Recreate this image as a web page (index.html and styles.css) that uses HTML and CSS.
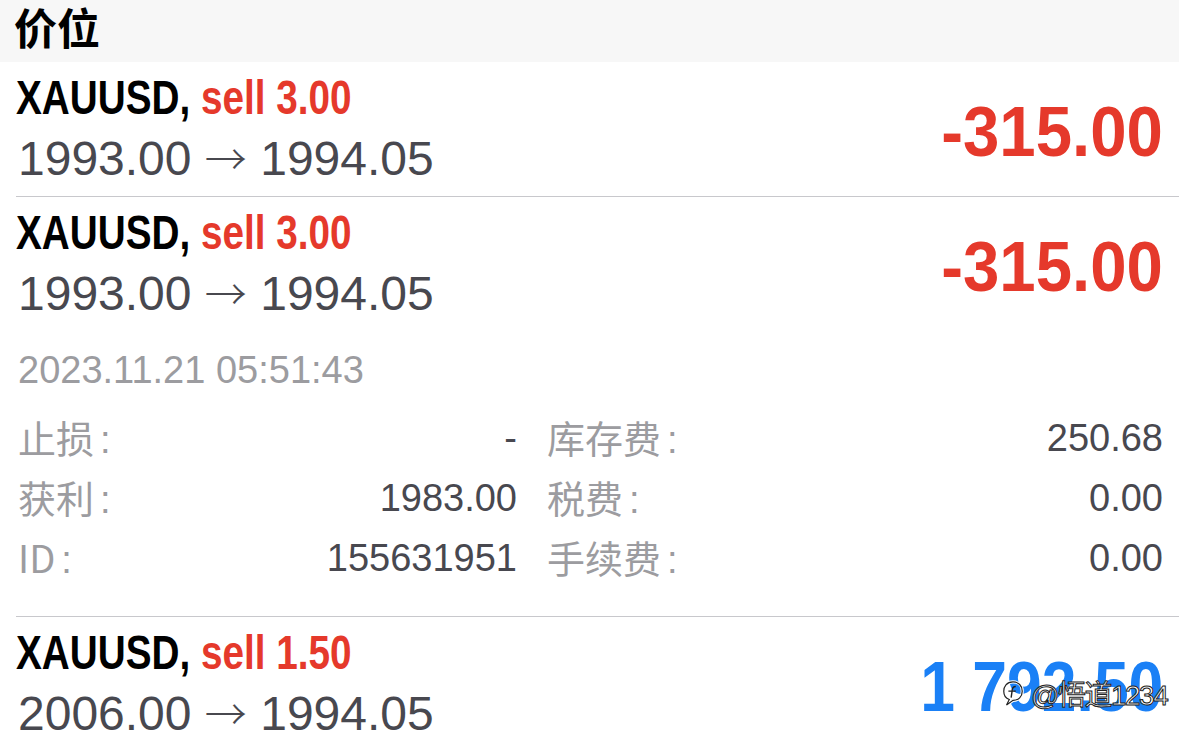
FILE: index.html
```html
<!DOCTYPE html>
<html lang="zh">
<head>
    <meta charset="UTF-8">
    <meta name="viewport" content="width=device-width, initial-scale=1.0">
    <title>价位</title>
    <link rel="stylesheet" href="styles.css">
</head>
<body>
    <div class="section-head">价位</div>

    <!-- 持仓 1 -->
    <div class="position">
        <div class="pos-top">
            <div class="pos-info">
                <div class="pos-title"><span class="narrow">XAUUSD, <span class="sell">sell 3.00</span></span></div>
                <div class="pos-price">1993.00 <span class="arrow">→</span> 1994.05</div>
            </div>
            <div class="pos-profit loss">-315.00</div>
        </div>
    </div>

    <!-- 持仓 2 (展开) -->
    <div class="position">
        <div class="pos-top">
            <div class="pos-info">
                <div class="pos-title"><span class="narrow">XAUUSD, <span class="sell">sell 3.00</span></span></div>
                <div class="pos-price">1993.00 <span class="arrow">→</span> 1994.05</div>
            </div>
            <div class="pos-profit loss">-315.00</div>
        </div>
        <div class="pos-time">2023.11.21 05:51:43</div>
        <div class="pos-details">
            <div class="detail"><span class="label">止损<i>:</i></span><span class="value">-</span></div>
            <div class="detail"><span class="label">库存费<i>:</i></span><span class="value">250.68</span></div>
            <div class="detail"><span class="label">获利<i>:</i></span><span class="value">1983.00</span></div>
            <div class="detail"><span class="label">税费<i>:</i></span><span class="value">0.00</span></div>
            <div class="detail"><span class="label">ID<i>:</i></span><span class="value">155631951</span></div>
            <div class="detail"><span class="label">手续费<i>:</i></span><span class="value">0.00</span></div>
        </div>
    </div>

    <!-- 持仓 3 -->
    <div class="position last">
        <div class="pos-top">
            <div class="pos-info">
                <div class="pos-title"><span class="narrow">XAUUSD, <span class="sell">sell 1.50</span></span></div>
                <div class="pos-price">2006.00 <span class="arrow">→</span> 1994.05</div>
            </div>
            <div class="pos-profit gain">1 792.50</div>
        </div>
    </div>

    <div class="watermark">
        <svg class="wm-icon" width="24" height="28" viewBox="0 0 26 30">
            <path d="M13 3 C6 3 3 8 3 13 C3 18 6 21 9 22 L6 28 L13 23 C19 23 23 19 23 13 C23 7 19 3 13 3 Z" fill="none" stroke="#fff" stroke-width="3.4"/>
            <path d="M13 3 C6 3 3 8 3 13 C3 18 6 21 9 22 L6 28 L13 23 C19 23 23 19 23 13 C23 7 19 3 13 3 Z" fill="none" stroke="#222" stroke-width="1.3"/>
            <path d="M16 8 C13 8 12 10 12 13 L11 20 M8 13 L16 13" fill="none" stroke="#222" stroke-width="1.5"/>
        </svg>
        <span>@悟道1234</span>
    </div>
</body>
</html>
```

FILE: styles.css
```css
body {
    margin: 0;
    background-color: #fff;
    font-family: "Liberation Sans", Arial, "Noto Sans CJK SC", sans-serif;
    color: #48484f;
    overflow: hidden;
    position: relative;
    height: 745px;
}
.section-head {
    background-color: #f7f7f7;
    height: 52px;
    padding: 0 0 10px 14px;
    line-height: 52px;
    font-family: "Noto Sans CJK SC", sans-serif;
    font-size: 43px;
    font-weight: bold;
    color: #000;
}
.position {
    margin-left: 16px;
    padding: 5px 16px 5px 0;
    border-bottom: 1px solid #c8c8cc;
}
.position.last {
    border-bottom: none;
}
.pos-top {
    display: flex;
    align-items: center;
    justify-content: space-between;
}
.pos-title {
    font-weight: bold;
    font-size: 49px;
    line-height: 60px;
    height: 60px;
    color: #000;
    white-space: nowrap;
}
.narrow {
    display: inline-block;
    transform: scaleX(0.79);
    transform-origin: left center;
}
.sell {
    color: #e5392b;
}
.pos-price {
    font-size: 48px;
    line-height: 64px;
    height: 64px;
    color: #48484f;
    padding-left: 2px;
    white-space: nowrap;
}
.arrow {
    font-family: "Noto Sans CJK SC", sans-serif;
    font-size: 42px;
    font-weight: 300;
    line-height: 1;
}
.pos-profit {
    font-weight: bold;
    font-size: 71px;
    padding-top: 4px;
    transform: scaleX(0.92);
    transform-origin: right center;
    white-space: nowrap;
}
.loss {
    color: #e5392b;
}
.gain {
    color: #1a80f6;
    transform: scaleX(0.88);
}
.pos-time {
    margin-top: 14px;
    font-size: 38px;
    line-height: 60px;
    color: #9c9ca0;
    padding-left: 2px;
}
.pos-details {
    display: grid;
    grid-template-columns: 499px 1fr;
    column-gap: 30px;
    margin-top: 8px;
    padding-left: 2px;
    padding-bottom: 23px;
}
.detail {
    display: flex;
    justify-content: space-between;
    align-items: center;
    height: 60px;
    font-size: 38px;
    line-height: 1;
}
.label {
    font-family: "Noto Sans CJK SC", sans-serif;
    color: #9c9ca0;
}
.label i {
    font-style: normal;
    font-family: "Liberation Sans", sans-serif;
    margin-left: 6px;
}
.value {
    color: #48484f;
}
.watermark {
    position: absolute;
    left: 1001px;
    top: 673px;
    display: flex;
    align-items: center;
    gap: 6px;
    font-family: "Liberation Sans", "Noto Sans CJK SC", sans-serif;
    font-size: 28px;
    color: #fff;
    -webkit-text-stroke: 1px #222;
    letter-spacing: -1.5px;
}
```
